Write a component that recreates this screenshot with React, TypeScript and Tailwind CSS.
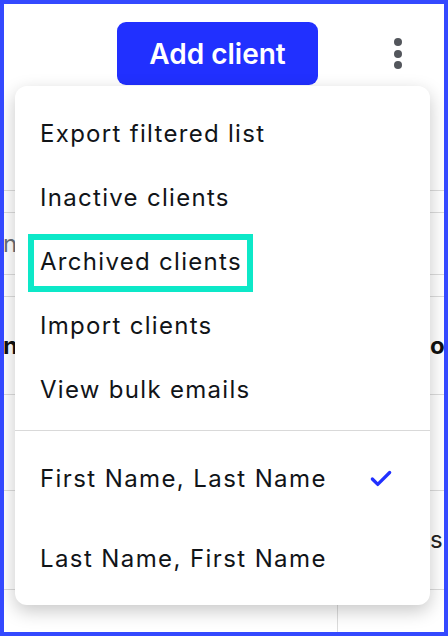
import { Check } from 'lucide-react'

const menuItems = ['Export filtered list', 'Inactive clients', 'Archived clients', 'Import clients', 'View bulk emails']
const nameOrders = [
  { label: 'First Name, Last Name', selected: true },
  { label: 'Last Name, First Name', selected: false },
]

function TableRow({ h, left, right, leftClass = '', rightClass = '', split = false }: { h: string; left?: string; right?: string; leftClass?: string; rightClass?: string; split?: boolean }) {
  return (
    <div className={`grid grid-cols-[333px_1fr] border-b border-[#dcdcdc] ${h}`}>
      <div className="flex items-center overflow-hidden whitespace-nowrap">
        {left && <span className={`-ml-[1px] text-[24px] ${leftClass}`}>{left}</span>}
      </div>
      <div className={`flex items-center overflow-hidden whitespace-nowrap pl-[93px] ${split ? 'border-l border-[#dcdcdc]' : ''}`}>
        {right && <span className={`text-[24px] ${rightClass}`}>{right}</span>}
      </div>
    </div>
  )
}

export default function App() {
  return (
    <div className="relative h-[636px] w-[448px] overflow-hidden border-4 border-[#3449ff] bg-white font-['Inter','Liberation_Sans',sans-serif]">
      <div className="flex h-[82px] items-start justify-end gap-[76px] pr-[42px] pt-[18px]">
        <button type="button" className="flex h-[63px] w-[201px] items-center justify-center rounded-[9px] bg-[#2130ff] text-[28px] font-semibold text-white">
          Add client
        </button>
        <div className="mt-[16px] flex flex-col items-center gap-[3.5px]">
          <span className="h-[8px] w-[8px] rounded-full bg-[#53565c]" />
          <span className="h-[8px] w-[8px] rounded-full bg-[#53565c]" />
          <span className="h-[8px] w-[8px] rounded-full bg-[#53565c]" />
        </div>
      </div>

      <TableRow h="h-[105px]" />
      <TableRow h="h-[22px]" />
      <TableRow h="h-[62px]" left="n" leftClass="text-[#6b6f76]" />
      <TableRow h="h-[22px]" />
      <TableRow h="h-[98px]" left="n" right="o" leftClass="font-bold text-[#111]" rightClass="font-bold text-[#111]" />
      <TableRow h="h-[96px]" />
      <TableRow h="h-[99px]" right="s" rightClass="text-[#222]" />
      <TableRow h="h-[60px]" split />

      <div className="absolute left-[11px] top-[82px] w-[415px] rounded-[12px] bg-white shadow-[0_6px_18px_rgba(0,0,0,0.22)]">
        <ul className="pb-2 pt-4">
          {menuItems.map((item) => (
            <li key={item} className="flex h-[64px] items-center pl-[25px] text-[24px] tracking-[1.3px] text-[#111418]">
              {item === 'Archived clients' ? (
                <span className="relative">
                  {item}
                  <span className="absolute -bottom-[12px] -left-[12px] -right-[11px] -top-[10px] border-[6px] border-[#0de8c8]" />
                </span>
              ) : (
                item
              )}
            </li>
          ))}
        </ul>
        <div className="h-px bg-[#d9d9d9]" />
        <ul className="pb-[6px] pt-2">
          {nameOrders.map((o) => (
            <li key={o.label} className="flex h-[80px] items-center justify-between pl-[25px] pr-[36px] text-[24px] tracking-[1.4px] text-[#111418]">
              {o.label}
              {o.selected && <Check className="h-[26px] w-[26px] text-[#2130ff]" strokeWidth={3} />}
            </li>
          ))}
        </ul>
      </div>
    </div>
  )
}
